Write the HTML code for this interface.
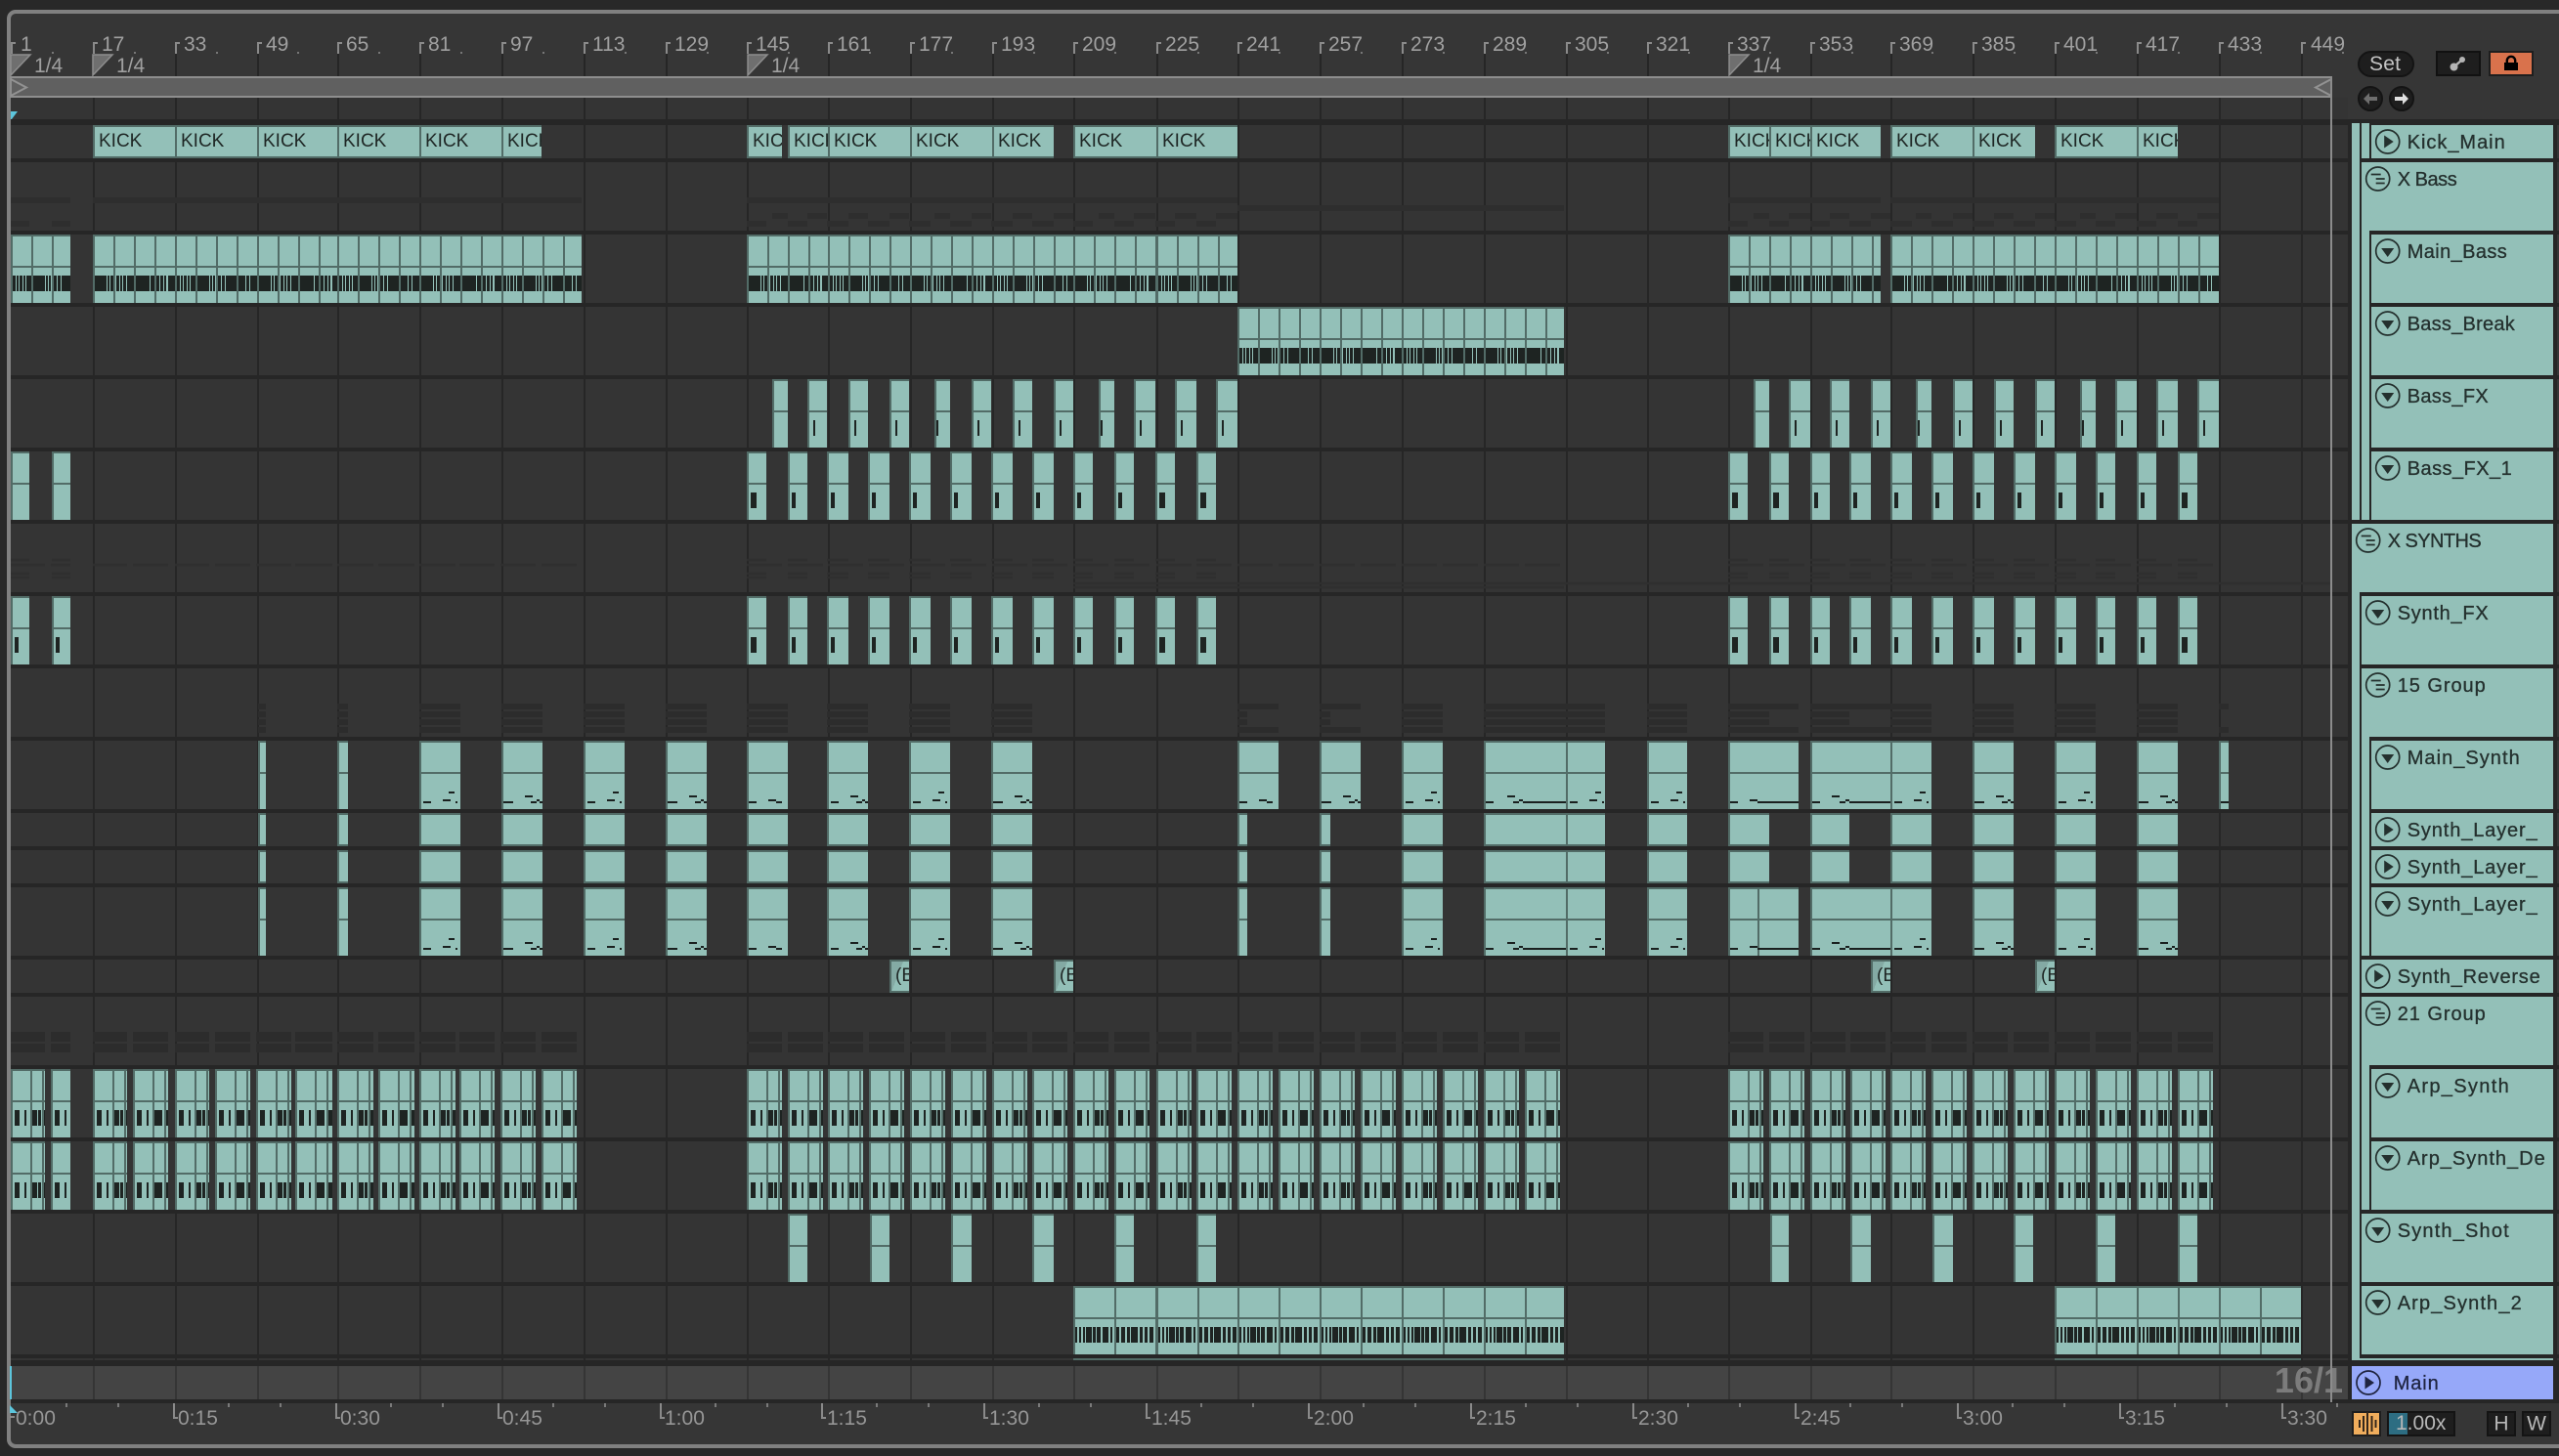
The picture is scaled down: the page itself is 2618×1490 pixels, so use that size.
<!DOCTYPE html>
<html><head><meta charset="utf-8"><title>Arrangement</title>
<style>
html,body{margin:0;padding:0;background:#282828}
#p{position:relative;width:2618px;height:1490px;overflow:hidden;font-family:"Liberation Sans",sans-serif}
svg{position:absolute;left:0;top:0}
text{font-family:"Liberation Sans",sans-serif}
.r{position:absolute;left:0;width:2402px}
.r i{position:absolute;top:0;height:100%;box-sizing:border-box;overflow:hidden;font-style:normal;white-space:nowrap;
--e:linear-gradient(#526c67,#526c67);
background:var(--e) 0 0/100% 2px no-repeat,var(--e) 0 32px/100% 2px no-repeat,var(--e) 0 0/2px 100% no-repeat,#93c0b8}
.h7{height:70px}.h3{height:34px}
.k i{font-size:19px;line-height:34px;color:#1e2624;padding-left:6px}
.rv i{font-size:19px;line-height:34px;color:#1e2624;padding-left:6px;
background:var(--e) 0 0/100% 2px no-repeat,var(--e) 0 32px/100% 2px no-repeat,var(--e) 0 0/2px 100% no-repeat,linear-gradient(to bottom right,#84aaa4 50%,transparent 50%) 2px 2px/12px 31px no-repeat,#93c0b8}
.r b{position:absolute;background:#1e2422}
.fx b{top:42px;left:6px;width:2px;height:16px}
.f1 b{top:42px;left:4px;width:4px;height:16px}
.b i{--bc:linear-gradient(90deg,transparent 0 2px,#1e2422 2px 5px,transparent 5px 6px,#1e2422 6px 8px,transparent 8px 9px,#1e2422 9px 12px,transparent 12px 13px,#1e2422 13px 15px,transparent 15px 16px,#1e2422 16px 21px,transparent 21px 23px,#1e2422 23px 35px,transparent 35px 36px,#1e2422 36px 38px,transparent 38px 39px,#1e2422 39px 41px,transparent 41px 44px,#1e2422 44px 47px,transparent 47px 48px,#1e2422 48px 51px,transparent 51px 52px,#1e2422 52px 63px,transparent 63px 65px,#1e2422 65px 72px,transparent 72px 73px,#1e2422 73px 76px,transparent 76px 77px,#1e2422 77px 84px);
background:var(--e) 0 0/100% 2px no-repeat,var(--e) 0 32px/100% 2px no-repeat,repeating-linear-gradient(90deg,#526c67 0 2px,transparent 2px 21px),var(--bc) 0 42px/84px 16px no-repeat,#93c0b8}
.b i:nth-child(even){--bc:linear-gradient(90deg,transparent 0 2px,#1e2422 2px 14px,transparent 14px 15px,#1e2422 15px 17px,transparent 17px 18px,#1e2422 18px 21px,transparent 21px 24px,#1e2422 24px 27px,transparent 27px 28px,#1e2422 28px 30px,transparent 30px 31px,#1e2422 31px 34px,transparent 34px 35px,#1e2422 35px 42px,transparent 42px 44px,#1e2422 44px 58px,transparent 58px 59px,#1e2422 59px 63px,transparent 63px 65px,#1e2422 65px 68px,transparent 68px 69px,#1e2422 69px 72px,transparent 72px 73px,#1e2422 73px 75px,transparent 75px 77px,#1e2422 77px 84px)}
.d i{--bc:linear-gradient(90deg,transparent 0 2px,#1e2422 2px 4px,transparent 4px 6px,#1e2422 6px 8px,transparent 8px 10px,#1e2422 10px 12px,transparent 12px 13px,#1e2422 13px 19px,transparent 19px 20px,#1e2422 20px 23px,transparent 23px 24px,#1e2422 24px 28px,transparent 28px 30px,#1e2422 30px 36px,transparent 36px 38px,#1e2422 38px 40px,transparent 40px 44px,#1e2422 44px 47px,transparent 47px 49px,#1e2422 49px 53px,transparent 53px 55px,#1e2422 55px 58px,transparent 58px 59px,#1e2422 59px 66px,transparent 66px 68px,#1e2422 68px 71px,transparent 71px 73px,#1e2422 73px 76px,transparent 76px 78px,#1e2422 78px 82px,transparent 82px 84px);
background:var(--e) 0 0/100% 2px no-repeat,var(--e) 0 32px/100% 2px no-repeat,repeating-linear-gradient(90deg,#526c67 0 2px,transparent 2px 42px),var(--bc) 0 42px/84px 16px no-repeat,#93c0b8}
.a i{--bc:linear-gradient(90deg,transparent 0 4px,#1e2422 4px 9px,transparent 9px 14px,#1e2422 14px 16px,transparent 16px 22px,#1e2422 22px 27px,transparent 27px 28px,#1e2422 28px 31px,transparent 31px 34px,#1e2422 34px 36px);
background:var(--e) 0 0/100% 2px no-repeat,var(--e) 0 32px/100% 2px no-repeat,var(--e) 0 0/2px 100% no-repeat,var(--e) 20px 0/2px 100% no-repeat,var(--e) 32px 0/2px 100% no-repeat,var(--bc) 0 42px/38px 16px no-repeat,#93c0b8}
.a i:nth-child(even){--bc:linear-gradient(90deg,transparent 0 4px,#1e2422 4px 9px,transparent 9px 14px,#1e2422 14px 16px,transparent 16px 22px,#1e2422 22px 30px,transparent 30px 34px,#1e2422 34px 36px)}
</style></head><body><div id="p">
<svg width="2618" height="1490" viewBox="0 0 2618 1490">
<defs>
<path id="gb" d="M11 0H72M95 0H595M764 0H1266M1768 0H1924M1934 0H2270"/>
<path id="gfx" d="M790 0h16M826 0h20M868 0h20M910 0h20M956 0h16M994 0h20M1036 0h20M1078 0h20M1124 0h16M1160 0h22M1202 0h22M1244 0h22M1794 0h16M1830 0h22M1872 0h20M1914 0h20M1960 0h16M1998 0h20M2040 0h20M2082 0h20M2128 0h16M2164 0h22M2206 0h22M2248 0h22"/>
<path id="gf1" d="M11 0h19M53 0h19M764 0h20M806 0h20M846 0h22M888 0h22M930 0h22M972 0h22M1014 0h22M1056 0h22M1098 0h20M1140 0h20M1182 0h20M1224 0h20M1768 0h20M1810 0h20M1852 0h20M1892 0h22M1934 0h22M1976 0h22M2018 0h22M2060 0h22M2102 0h22M2144 0h20M2186 0h20M2228 0h20"/>
<path id="gs0" d="M264 0h8M345 0h11M429 0h42M513 0h42M597 0h42M681 0h42M764 0h42M846 0h42M930 0h42M1014 0h42M1266 0h42M1350 0h42M1434 0h42M1518 0h124M1685 0h41M1768 0h72M1852 0h124M2018 0h42M2102 0h42M2186 0h42M2270 0h10"/>
<path id="gs1" d="M264 0h8M345 0h11M429 0h42M513 0h42M597 0h42M681 0h42M764 0h42M846 0h42M930 0h42M1014 0h42M1266 0h10M1350 0h11M1434 0h42M1518 0h124M1685 0h41M1768 0h42M1852 0h40M1934 0h42M2018 0h42M2102 0h42M2186 0h42"/>
<path id="gar" d="M11 0h35M52 0h20M95 0h35M136 0h36M179 0h35M220 0h36M262 0h36M302 0h38M345 0h37M387 0h37M429 0h37M470 0h36M512 0h36M554 0h36M764 0h36M806 0h36M847 0h36M889 0h36M931 0h36M973 0h36M1015 0h36M1056 0h36M1098 0h36M1140 0h36M1183 0h36M1224 0h36M1266 0h36M1308 0h36M1350 0h36M1392 0h36M1434 0h36M1476 0h36M1518 0h36M1560 0h36M1768 0h36M1810 0h36M1852 0h36M1893 0h36M1934 0h36M1976 0h36M2018 0h36M2060 0h36M2102 0h36M2144 0h36M2186 0h36M2228 0h36"/>
<g id="ip"><circle r="12" fill="none" stroke="currentColor" stroke-width="1.7"/><path d="M-3.5-6.5L6 0-3.5 6.5z" fill="currentColor"/></g>
<g id="id"><circle r="12" fill="none" stroke="currentColor" stroke-width="1.7"/><path d="M-6.500-3L6.500-3 0 6z" fill="currentColor"/></g>
<g id="ig"><circle r="12" fill="none" stroke="currentColor" stroke-width="1.7"/><path d="M-7-4.500H3M-2 0H7M-2 4.500H7" fill="none" stroke="currentColor" stroke-width="1.800"/></g>
</defs>
<rect width="2618" height="1490" fill="#282828"/>
<rect x="9" y="12" width="2700" height="1468" rx="7" fill="#363636" stroke="#808080" stroke-width="4"/>
<rect x="11" y="100" width="2391" height="1292" fill="#343434"/>
<rect x="2402" y="122" width="4" height="1314" fill="#262626"/>
<rect x="2612" y="122" width="4" height="1314" fill="#262626"/>
<rect x="2616" y="128" width="2" height="1264" fill="#363636"/>
<rect x="11" y="1398" width="2391" height="34" fill="#444"/>
<path fill="#262626" d="M11 122H2618V128H11zM11 162H2618v4H11zM11 236H2618v4H11zM11 310H2618v4H11zM11 384H2618v4H11zM11 458H2618v4H11zM11 532H2618v4H11zM11 606H2618v4H11zM11 680H2618v4H11zM11 754H2618v4H11zM11 828H2618v4H11zM11 866H2618v4H11zM11 904H2618v4H11zM11 978H2618v4H11zM11 1016H2618v4H11zM11 1090H2618v4H11zM11 1164H2618v4H11zM11 1238H2618v4H11zM11 1312H2618v4H11zM11 1386H2618v4H11zM11 1392H2618V1398H11zM11 1432H2618v4H11z"/>
<rect x="2612" y="1398" width="6" height="38" fill="#262626"/>
<path stroke="#262626" stroke-width="2" fill="none" d="M96 55V1392M180 55V1392M264 55V1392M346 55V1392M430 55V1392M514 55V1392M598 55V1392M682 55V1392M765 55V1392M848 55V1392M932 55V1392M1016 55V1392M1099 55V1392M1184 55V1392M1267 55V1392M1351 55V1392M1435 55V1392M1519 55V1392M1603 55V1392M1686 55V1392M1769 55V1392M1853 55V1392M1935 55V1392M2019 55V1392M2103 55V1392M2187 55V1392M2271 55V1392M2355 55V1392"/>
<path stroke="#353535" stroke-width="2" fill="none" d="M96 1398V1432M180 1398V1432M264 1398V1432M346 1398V1432M430 1398V1432M514 1398V1432M598 1398V1432M682 1398V1432M765 1398V1432M848 1398V1432M932 1398V1432M1016 1398V1432M1099 1398V1432M1184 1398V1432M1267 1398V1432M1351 1398V1432M1435 1398V1432M1519 1398V1432M1603 1398V1432M1686 1398V1432M1769 1398V1432M1853 1398V1432M1935 1398V1432M2019 1398V1432M2103 1398V1432M2187 1398V1432M2271 1398V1432M2355 1398V1432"/>
<path fill="#526c67" d="M1098 1390H1600v2H1098zM2102 1390H2354v2H2102z"/>
<!-- ghost summaries -->
<g stroke="#2e2e2e" fill="none">
<use href="#gb" y="205" stroke-width="6"/><path d="M1266 213H1600" stroke-width="6"/><use href="#gfx" y="221" stroke-width="6"/><use href="#gf1" y="229" stroke-width="6"/>
</g>
<g stroke="#2c2c2c" fill="none">
<use href="#gs0" y="723" stroke-width="6"/><use href="#gs1" y="731" stroke-width="6"/><use href="#gs1" y="739" stroke-width="6"/><use href="#gs0" y="747" stroke-width="6"/>
<use href="#gar" y="1061" stroke-width="10"/><use href="#gar" y="1072.500" stroke-width="9"/>
</g>
<g stroke="#2f2f2f" fill="none">
<use href="#gf1" y="573" stroke-width="2.500"/><use href="#gar" y="578" stroke-width="2.500"/><use href="#gf1" y="587" stroke-width="2.500"/><use href="#gf1" y="591" stroke-width="2.500"/>
<path stroke-width="2.500" d="M1098 597H2385M1098 601H1600"/>
</g>
<!-- ruler -->
<path fill="#8a8a8a" d="M11 43h5v2h-3v10h-2zM95 43h5v2h-3v10h-2zM179 43h5v2h-3v10h-2zM263 43h5v2h-3v10h-2zM345 43h5v2h-3v10h-2zM429 43h5v2h-3v10h-2zM513 43h5v2h-3v10h-2zM597 43h5v2h-3v10h-2zM681 43h5v2h-3v10h-2zM764 43h5v2h-3v10h-2zM847 43h5v2h-3v10h-2zM931 43h5v2h-3v10h-2zM1015 43h5v2h-3v10h-2zM1098 43h5v2h-3v10h-2zM1183 43h5v2h-3v10h-2zM1266 43h5v2h-3v10h-2zM1350 43h5v2h-3v10h-2zM1434 43h5v2h-3v10h-2zM1518 43h5v2h-3v10h-2zM1602 43h5v2h-3v10h-2zM1685 43h5v2h-3v10h-2zM1768 43h5v2h-3v10h-2zM1852 43h5v2h-3v10h-2zM1934 43h5v2h-3v10h-2zM2018 43h5v2h-3v10h-2zM2102 43h5v2h-3v10h-2zM2186 43h5v2h-3v10h-2zM2270 43h5v2h-3v10h-2zM2354 43h5v2h-3v10h-2z"/>
<path fill="#777" d="M53 53h2v2h-2zM137 53h2v2h-2zM221 53h2v2h-2zM304 53h2v2h-2zM387 53h2v2h-2zM471 53h2v2h-2zM555 53h2v2h-2zM639 53h2v2h-2zM723 53h2v2h-2zM806 53h2v2h-2zM889 53h2v2h-2zM973 53h2v2h-2zM1057 53h2v2h-2zM1140 53h2v2h-2zM1225 53h2v2h-2zM1308 53h2v2h-2zM1392 53h2v2h-2zM1476 53h2v2h-2zM1560 53h2v2h-2zM1644 53h2v2h-2zM1727 53h2v2h-2zM1810 53h2v2h-2zM1894 53h2v2h-2zM1976 53h2v2h-2zM2060 53h2v2h-2zM2144 53h2v2h-2zM2228 53h2v2h-2zM2312 53h2v2h-2zM2396 53h2v2h-2z"/>
<g font-size="21" fill="#a0a0a0">
<text x="21" y="52">1</text><text x="104" y="52">17</text><text x="188" y="52">33</text><text x="272" y="52">49</text><text x="354" y="52">65</text><text x="438" y="52">81</text><text x="522" y="52">97</text><text x="606" y="52">113</text><text x="690" y="52">129</text><text x="773" y="52">145</text><text x="856" y="52">161</text><text x="940" y="52">177</text><text x="1024" y="52">193</text><text x="1107" y="52">209</text><text x="1192" y="52">225</text><text x="1275" y="52">241</text><text x="1359" y="52">257</text><text x="1443" y="52">273</text><text x="1527" y="52">289</text><text x="1611" y="52">305</text><text x="1694" y="52">321</text><text x="1777" y="52">337</text><text x="1861" y="52">353</text><text x="1943" y="52">369</text><text x="2027" y="52">385</text><text x="2111" y="52">401</text><text x="2195" y="52">417</text><text x="2279" y="52">433</text><text x="2364" y="52">449</text>
<text x="35" y="74">1/4</text><text x="119" y="74">1/4</text><text x="789" y="74">1/4</text><text x="1793" y="74">1/4</text>
</g>
<g fill="#6f6f6f" stroke="#8e8e8e" stroke-width="1.500">
<path d="M11 56H31L11 77z"/><path d="M95 56H115L95 77z"/><path d="M765 56H785L765 77z"/><path d="M1769 56H1789L1769 77z"/>
</g>
<!-- loop brace -->
<rect x="11" y="79" width="2374" height="20" fill="#606060" stroke="#8e8e8e" stroke-width="2"/>
<path d="M11 81L27 89.500 11 98M2385 81L2369 89.500 2385 98" fill="none" stroke="#929292" stroke-width="2"/>
<rect x="2384" y="78" width="2" height="1357" fill="#8c8c8c"/>
<path d="M11 114H18L12 122H11z" fill="#5cc5dc"/>
<rect x="10" y="1398" width="2" height="34" fill="#5cc5dc"/>
<!-- time ruler -->
<path fill="#8a8a8a" d="M177 1436h2v14h3v2h-5zM343 1436h2v14h3v2h-5zM509 1436h2v14h3v2h-5zM675 1436h2v14h3v2h-5zM840 1436h2v14h3v2h-5zM1006 1436h2v14h3v2h-5zM1172 1436h2v14h3v2h-5zM1338 1436h2v14h3v2h-5zM1504 1436h2v14h3v2h-5zM1670 1436h2v14h3v2h-5zM1836 1436h2v14h3v2h-5zM2002 1436h2v14h3v2h-5zM2168 1436h2v14h3v2h-5zM2334 1436h2v14h3v2h-5z"/>
<path fill="#7a7a7a" d="M67 1436h2v4h-2zM120 1436h2v4h-2zM233 1436h2v4h-2zM286 1436h2v4h-2zM399 1436h2v4h-2zM452 1436h2v4h-2zM565 1436h2v4h-2zM618 1436h2v4h-2zM731 1436h2v4h-2zM784 1436h2v4h-2zM896 1436h2v4h-2zM949 1436h2v4h-2zM1062 1436h2v4h-2zM1115 1436h2v4h-2zM1228 1436h2v4h-2zM1281 1436h2v4h-2zM1394 1436h2v4h-2zM1447 1436h2v4h-2zM1560 1436h2v4h-2zM1613 1436h2v4h-2zM1726 1436h2v4h-2zM1779 1436h2v4h-2zM1892 1436h2v4h-2zM1945 1436h2v4h-2zM2058 1436h2v4h-2zM2111 1436h2v4h-2zM2224 1436h2v4h-2zM2277 1436h2v4h-2zM2390 1436h2v4h-2z"/>
<path d="M10 1438L18 1446H10z" fill="#5cc5dc"/><rect x="10" y="1449" width="5" height="2" fill="#8a8a8a"/>
<g font-size="21" fill="#969696">
<text x="16" y="1458">0:00</text><text x="182" y="1458">0:15</text><text x="348" y="1458">0:30</text><text x="514" y="1458">0:45</text><text x="680" y="1458">1:00</text><text x="846" y="1458">1:15</text><text x="1012" y="1458">1:30</text><text x="1178" y="1458">1:45</text><text x="1344" y="1458">2:00</text><text x="1510" y="1458">2:15</text><text x="1676" y="1458">2:30</text><text x="1842" y="1458">2:45</text><text x="2008" y="1458">3:00</text><text x="2174" y="1458">3:15</text><text x="2340" y="1458">3:30</text>
</g>
<text x="2397" y="1425" text-anchor="end" font-size="36" font-weight="700" fill="#7c7c7c">16/1</text>
<rect x="2384" y="1398" width="2" height="37" fill="#8c8c8c"/>
<!-- sidebar -->
<rect x="2406" y="126" width="206" height="1266" fill="#93c0b8"/>
<path fill="#262626" d="M2426 126H2612V128H2426zM2414 126h2V532h-2zM2414 606h2V1390h-2zM2424 126h2V162h-2zM2424 236h2V532h-2zM2424 754h2V978h-2zM2424 1090h2V1238h-2zM2416 162H2612v4H2416zM2424 236H2612v4H2424zM2424 310H2612v4H2424zM2424 384H2612v4H2424zM2424 458H2612v4H2424zM2406 532H2612v4H2406zM2414 606H2612v4H2414zM2414 680H2612v4H2414zM2424 754H2612v4H2424zM2424 828H2612v4H2424zM2424 866H2612v4H2424zM2424 904H2612v4H2424zM2414 978H2612v4H2414zM2414 1016H2612v4H2414zM2424 1090H2612v4H2424zM2424 1164H2612v4H2424zM2414 1238H2612v4H2414zM2414 1312H2612v4H2414zM2414 1386H2612v4H2414z"/>
<rect x="2406" y="1398" width="206" height="34" fill="#96a8f9"/>
<g style="color:#24302e">
<use href="#ip" x="2442.700" y="145"/><use href="#ig" x="2432.700" y="183"/><use href="#id" x="2442.700" y="257"/><use href="#id" x="2442.700" y="331"/><use href="#id" x="2442.700" y="405"/><use href="#id" x="2442.700" y="479"/><use href="#ig" x="2422.700" y="553"/><use href="#id" x="2432.700" y="627"/><use href="#ig" x="2432.700" y="701"/><use href="#id" x="2442.700" y="775"/><use href="#ip" x="2442.700" y="849"/><use href="#ip" x="2442.700" y="887"/><use href="#id" x="2442.700" y="925"/><use href="#ip" x="2432.700" y="999"/><use href="#ig" x="2432.700" y="1037"/><use href="#id" x="2442.700" y="1111"/><use href="#id" x="2442.700" y="1185"/><use href="#id" x="2432.700" y="1259"/><use href="#id" x="2432.700" y="1333"/>
</g>
<use href="#ip" x="2423" y="1415" style="color:#1f2440"/>
<g font-size="20" fill="#24302e" stroke="#24302e" stroke-width=".3">
<text x="2462.700" y="152" textLength="100">Kick_Main</text>
<text x="2452.700" y="190" textLength="61">X Bass</text>
<text x="2462.700" y="264" textLength="102">Main_Bass</text>
<text x="2462.700" y="338" textLength="110">Bass_Break</text>
<text x="2462.700" y="412" textLength="83">Bass_FX</text>
<text x="2462.700" y="486" textLength="107">Bass_FX_1</text>
<text x="2442.700" y="560" textLength="96">X SYNTHS</text>
<text x="2452.700" y="634" textLength="93">Synth_FX</text>
<text x="2452.700" y="708" textLength="90">15 Group</text>
<text x="2462.700" y="782" textLength="115">Main_Synth</text>
<text x="2462.700" y="856" textLength="133">Synth_Layer_</text>
<text x="2462.700" y="894" textLength="133">Synth_Layer_</text>
<text x="2462.700" y="932" textLength="133">Synth_Layer_</text>
<text x="2452.700" y="1006" textLength="146">Synth_Reverse</text>
<text x="2452.700" y="1044" textLength="90">21 Group</text>
<text x="2462.700" y="1118" textLength="104">Arp_Synth</text>
<text x="2462.700" y="1192" textLength="141">Arp_Synth_De</text>
<text x="2452.700" y="1266" textLength="114">Synth_Shot</text>
<text x="2452.700" y="1340" textLength="127">Arp_Synth_2</text>
</g>
<text x="2448.700" y="1422" font-size="20" textLength="46" fill="#1f2440" stroke="#1f2440" stroke-width=".3">Main</text>
<!-- top right controls -->
<rect x="2413" y="53" width="56" height="25" rx="12.500" fill="#1e1e1e" stroke="#141414" stroke-width="2"/>
<text x="2424" y="72" font-size="21" fill="#c4c4c4" textLength="32">Set</text>
<rect x="2493" y="53" width="44" height="24" fill="#1e1e1e" stroke="#111" stroke-width="2"/>
<path d="M2510.500 68.500L2519 61" stroke="#b4b4b4" stroke-width="2.500"/><circle cx="2510.500" cy="68.500" r="4" fill="#b4b4b4"/><circle cx="2519" cy="61" r="3" fill="#b4b4b4"/>
<rect x="2547" y="53" width="44" height="24" fill="#d9724c" stroke="#1e1e1e" stroke-width="2"/>
<rect x="2562" y="64" width="14" height="8" fill="#000"/><path d="M2564.800 64v-2a4.200 4.200 0 0 1 8.400 0v2" fill="none" stroke="#000" stroke-width="2.400"/>
<circle cx="2425" cy="101" r="12" fill="#1e1e1e" stroke="#141414" stroke-width="2"/><circle cx="2457" cy="101" r="12" fill="#1e1e1e" stroke="#141414" stroke-width="2"/>
<path d="M2418 101l6-6v4h8v4h-8v4z" fill="#6e6e6e"/><path d="M2464 101l-6-6v4h-8v4h8v4z" fill="#e0e0e0"/>
<!-- bottom right controls -->
<rect x="2407" y="1445" width="28" height="24" fill="#f0ad5c" stroke="#1e1e1e" stroke-width="2"/>
<path d="M2414 1453v8M2418 1449v16M2422 1445v24M2426.500 1449v16M2430.500 1453v8" stroke="#33261a" stroke-width="2" fill="none"/>
<rect x="2443" y="1445" width="68" height="24" fill="#1e1e1e" stroke="#141414" stroke-width="2"/>
<rect x="2444" y="1446" width="19" height="22" fill="#2d6d82"/>
<text x="2451" y="1463" font-size="21" fill="#b8b8b8">1.00x</text>
<rect x="2545" y="1445" width="28" height="24" fill="#1e1e1e" stroke="#141414" stroke-width="2"/>
<rect x="2581" y="1445" width="28" height="24" fill="#1e1e1e" stroke="#141414" stroke-width="2"/>
<text x="2559" y="1463.500" font-size="21" fill="#b8b8b8" text-anchor="middle">H</text>
<text x="2595" y="1463.500" font-size="21" fill="#b8b8b8" text-anchor="middle">W</text>
</svg>

<div class="r h3 k" style="top:128px">
<i style="left:95px;width:84px">KICK</i><i style="left:179px;width:84px">KICK</i><i style="left:263px;width:82px">KICK</i><i style="left:345px;width:84px">KICK</i><i style="left:429px;width:84px">KICK</i><i style="left:513px;width:41px">KICK</i>
<i style="left:764px;width:36px">KICK</i><i style="left:806px;width:41px">KICK</i><i style="left:847px;width:84px">KICK</i><i style="left:931px;width:84px">KICK</i><i style="left:1015px;width:63px">KICK</i>
<i style="left:1098px;width:85px">KICK</i><i style="left:1183px;width:83px">KICK</i>
<i style="left:1768px;width:42px">KICK</i><i style="left:1810px;width:42px">KICK</i><i style="left:1852px;width:72px">KICK</i><i style="left:1934px;width:84px">KICK</i><i style="left:2018px;width:64px">KICK</i>
<i style="left:2102px;width:84px">KICK</i><i style="left:2186px;width:42px">KICK</i>
</div>

<div class="r h7 b" style="top:240px"><i style="left:11px;width:61px"></i><i style="left:95px;width:84px"></i><i style="left:179px;width:84px"></i><i style="left:263px;width:82px"></i><i style="left:345px;width:84px"></i><i style="left:429px;width:84px"></i><i style="left:513px;width:82px"></i><i style="left:764px;width:83px"></i><i style="left:847px;width:84px"></i><i style="left:931px;width:84px"></i><i style="left:1015px;width:83px"></i><i style="left:1098px;width:85px"></i><i style="left:1183px;width:83px"></i><i style="left:1768px;width:84px"></i><i style="left:1852px;width:72px"></i><i style="left:1934px;width:84px"></i><i style="left:2018px;width:84px"></i><i style="left:2102px;width:84px"></i><i style="left:2186px;width:84px"></i></div>

<div class="r h7 b" style="top:314px"><i style="left:1266px;width:84px"></i><i style="left:1350px;width:84px"></i><i style="left:1434px;width:84px"></i><i style="left:1518px;width:82px"></i></div>

<div class="r h7 fx" style="top:388px"><i style="left:790px;width:16px"></i><i style="left:826px;width:20px"><b></b></i><i style="left:868px;width:20px"><b></b></i><i style="left:910px;width:20px"><b></b></i><i style="left:956px;width:16px"><b style="left:2px"></b></i><i style="left:994px;width:20px"><b></b></i><i style="left:1036px;width:20px"><b></b></i><i style="left:1078px;width:20px"><b></b></i><i style="left:1124px;width:16px"><b style="left:2px"></b></i><i style="left:1160px;width:22px"><b></b></i><i style="left:1202px;width:22px"><b></b></i><i style="left:1244px;width:22px"><b></b></i><i style="left:1794px;width:16px"></i><i style="left:1830px;width:22px"><b></b></i><i style="left:1872px;width:20px"><b></b></i><i style="left:1914px;width:20px"><b></b></i><i style="left:1960px;width:16px"><b style="left:2px"></b></i><i style="left:1998px;width:20px"><b></b></i><i style="left:2040px;width:20px"><b></b></i><i style="left:2082px;width:20px"><b></b></i><i style="left:2128px;width:16px"><b style="left:2px"></b></i><i style="left:2164px;width:22px"><b></b></i><i style="left:2206px;width:22px"><b></b></i><i style="left:2248px;width:22px"><b></b></i></div>

<div class="r h7 f1" style="top:462px"><i style="left:11px;width:19px"></i><i style="left:53px;width:19px"></i><i style="left:764px;width:20px"><b style="width:6px"></b></i><i style="left:806px;width:20px"><b></b></i><i style="left:846px;width:22px"><b></b></i><i style="left:888px;width:22px"><b></b></i><i style="left:930px;width:22px"><b></b></i><i style="left:972px;width:22px"><b></b></i><i style="left:1014px;width:22px"><b></b></i><i style="left:1056px;width:22px"><b></b></i><i style="left:1098px;width:20px"><b></b></i><i style="left:1140px;width:20px"><b></b></i><i style="left:1182px;width:20px"><b style="width:6px"></b></i><i style="left:1224px;width:20px"><b style="width:6px"></b></i><i style="left:1768px;width:20px"><b style="width:6px"></b></i><i style="left:1810px;width:20px"><b style="width:6px"></b></i><i style="left:1852px;width:20px"><b></b></i><i style="left:1892px;width:22px"><b></b></i><i style="left:1934px;width:22px"><b></b></i><i style="left:1976px;width:22px"><b></b></i><i style="left:2018px;width:22px"><b></b></i><i style="left:2060px;width:22px"><b></b></i><i style="left:2102px;width:22px"><b></b></i><i style="left:2144px;width:20px"><b></b></i><i style="left:2186px;width:20px"><b></b></i><i style="left:2228px;width:20px"><b style="width:6px"></b></i></div>

<div class="r h7 f1" style="top:610px"><i style="left:11px;width:19px"><b></b></i><i style="left:53px;width:19px"><b></b></i><i style="left:764px;width:20px"><b style="width:6px"></b></i><i style="left:806px;width:20px"><b></b></i><i style="left:846px;width:22px"><b></b></i><i style="left:888px;width:22px"><b></b></i><i style="left:930px;width:22px"><b></b></i><i style="left:972px;width:22px"><b></b></i><i style="left:1014px;width:22px"><b></b></i><i style="left:1056px;width:22px"><b></b></i><i style="left:1098px;width:20px"><b></b></i><i style="left:1140px;width:20px"><b></b></i><i style="left:1182px;width:20px"><b style="width:6px"></b></i><i style="left:1224px;width:20px"><b style="width:6px"></b></i><i style="left:1768px;width:20px"><b style="width:6px"></b></i><i style="left:1810px;width:20px"><b style="width:6px"></b></i><i style="left:1852px;width:20px"><b></b></i><i style="left:1892px;width:22px"><b></b></i><i style="left:1934px;width:22px"><b></b></i><i style="left:1976px;width:22px"><b></b></i><i style="left:2018px;width:22px"><b></b></i><i style="left:2060px;width:22px"><b></b></i><i style="left:2102px;width:22px"><b></b></i><i style="left:2144px;width:20px"><b></b></i><i style="left:2186px;width:20px"><b></b></i><i style="left:2228px;width:20px"><b style="width:6px"></b></i></div>

<div class="r h7" style="top:758px"><i style="left:264px;width:8px"></i><i style="left:345px;width:11px"></i><i style="left:429px;width:42px"></i><i style="left:513px;width:42px"></i><i style="left:597px;width:42px"></i><i style="left:681px;width:42px"></i><i style="left:764px;width:42px"></i><i style="left:846px;width:42px"></i><i style="left:930px;width:42px"></i><i style="left:1014px;width:42px"></i><i style="left:1266px;width:42px"></i><i style="left:1350px;width:42px"></i><i style="left:1434px;width:42px"></i><i style="left:1518px;width:84px"></i><i style="left:1602px;width:40px"></i><i style="left:1685px;width:41px"></i><i style="left:1768px;width:72px"></i><i style="left:1852px;width:82px"></i><i style="left:1934px;width:42px"></i><i style="left:2018px;width:42px"></i><i style="left:2102px;width:42px"></i><i style="left:2186px;width:42px"></i><i style="left:2270px;width:10px"></i></div>

<div class="r h3" style="top:832px"><i style="left:264px;width:8px"></i><i style="left:345px;width:11px"></i><i style="left:429px;width:42px"></i><i style="left:513px;width:42px"></i><i style="left:597px;width:42px"></i><i style="left:681px;width:42px"></i><i style="left:764px;width:42px"></i><i style="left:846px;width:42px"></i><i style="left:930px;width:42px"></i><i style="left:1014px;width:42px"></i><i style="left:1266px;width:10px"></i><i style="left:1350px;width:11px"></i><i style="left:1434px;width:42px"></i><i style="left:1518px;width:84px"></i><i style="left:1602px;width:40px"></i><i style="left:1685px;width:41px"></i><i style="left:1768px;width:42px"></i><i style="left:1852px;width:40px"></i><i style="left:1934px;width:42px"></i><i style="left:2018px;width:42px"></i><i style="left:2102px;width:42px"></i><i style="left:2186px;width:42px"></i></div>

<div class="r h3" style="top:870px"><i style="left:264px;width:8px"></i><i style="left:345px;width:11px"></i><i style="left:429px;width:42px"></i><i style="left:513px;width:42px"></i><i style="left:597px;width:42px"></i><i style="left:681px;width:42px"></i><i style="left:764px;width:42px"></i><i style="left:846px;width:42px"></i><i style="left:930px;width:42px"></i><i style="left:1014px;width:42px"></i><i style="left:1266px;width:10px"></i><i style="left:1350px;width:11px"></i><i style="left:1434px;width:42px"></i><i style="left:1518px;width:84px"></i><i style="left:1602px;width:40px"></i><i style="left:1685px;width:41px"></i><i style="left:1768px;width:42px"></i><i style="left:1852px;width:40px"></i><i style="left:1934px;width:42px"></i><i style="left:2018px;width:42px"></i><i style="left:2102px;width:42px"></i><i style="left:2186px;width:42px"></i></div>

<div class="r h7" style="top:908px"><i style="left:264px;width:8px"></i><i style="left:345px;width:11px"></i><i style="left:429px;width:42px"></i><i style="left:513px;width:42px"></i><i style="left:597px;width:42px"></i><i style="left:681px;width:42px"></i><i style="left:764px;width:42px"></i><i style="left:846px;width:42px"></i><i style="left:930px;width:42px"></i><i style="left:1014px;width:42px"></i><i style="left:1266px;width:10px"></i><i style="left:1350px;width:11px"></i><i style="left:1434px;width:42px"></i><i style="left:1518px;width:84px"></i><i style="left:1602px;width:40px"></i><i style="left:1685px;width:41px"></i><i style="left:1768px;width:30px"></i><i style="left:1798px;width:42px"></i><i style="left:1852px;width:82px"></i><i style="left:1934px;width:42px"></i><i style="left:2018px;width:42px"></i><i style="left:2102px;width:42px"></i><i style="left:2186px;width:42px"></i></div>

<div class="r h3 rv" style="top:982px"><i style="left:910px;width:20px">(B</i><i style="left:1078px;width:20px">(B</i><i style="left:1914px;width:20px">(B</i><i style="left:2082px;width:20px">(B</i></div>

<div class="r h7 a" style="top:1094px"><i style="left:11px;width:35px"></i><i style="left:52px;width:20px"></i><i style="left:95px;width:35px"></i><i style="left:136px;width:36px"></i><i style="left:179px;width:35px"></i><i style="left:220px;width:36px"></i><i style="left:262px;width:36px"></i><i style="left:302px;width:38px"></i><i style="left:345px;width:37px"></i><i style="left:387px;width:37px"></i><i style="left:429px;width:37px"></i><i style="left:470px;width:36px"></i><i style="left:512px;width:36px"></i><i style="left:554px;width:36px"></i><i style="left:764px;width:36px"></i><i style="left:806px;width:36px"></i><i style="left:847px;width:36px"></i><i style="left:889px;width:36px"></i><i style="left:931px;width:36px"></i><i style="left:973px;width:36px"></i><i style="left:1015px;width:36px"></i><i style="left:1056px;width:36px"></i><i style="left:1098px;width:36px"></i><i style="left:1140px;width:36px"></i><i style="left:1183px;width:36px"></i><i style="left:1224px;width:36px"></i><i style="left:1266px;width:36px"></i><i style="left:1308px;width:36px"></i><i style="left:1350px;width:36px"></i><i style="left:1392px;width:36px"></i><i style="left:1434px;width:36px"></i><i style="left:1476px;width:36px"></i><i style="left:1518px;width:36px"></i><i style="left:1560px;width:36px"></i><i style="left:1768px;width:36px"></i><i style="left:1810px;width:36px"></i><i style="left:1852px;width:36px"></i><i style="left:1893px;width:36px"></i><i style="left:1934px;width:36px"></i><i style="left:1976px;width:36px"></i><i style="left:2018px;width:36px"></i><i style="left:2060px;width:36px"></i><i style="left:2102px;width:36px"></i><i style="left:2144px;width:36px"></i><i style="left:2186px;width:36px"></i><i style="left:2228px;width:36px"></i></div>

<div class="r h7 a" style="top:1168px"><i style="left:11px;width:35px"></i><i style="left:52px;width:20px"></i><i style="left:95px;width:35px"></i><i style="left:136px;width:36px"></i><i style="left:179px;width:35px"></i><i style="left:220px;width:36px"></i><i style="left:262px;width:36px"></i><i style="left:302px;width:38px"></i><i style="left:345px;width:37px"></i><i style="left:387px;width:37px"></i><i style="left:429px;width:37px"></i><i style="left:470px;width:36px"></i><i style="left:512px;width:36px"></i><i style="left:554px;width:36px"></i><i style="left:764px;width:36px"></i><i style="left:806px;width:36px"></i><i style="left:847px;width:36px"></i><i style="left:889px;width:36px"></i><i style="left:931px;width:36px"></i><i style="left:973px;width:36px"></i><i style="left:1015px;width:36px"></i><i style="left:1056px;width:36px"></i><i style="left:1098px;width:36px"></i><i style="left:1140px;width:36px"></i><i style="left:1183px;width:36px"></i><i style="left:1224px;width:36px"></i><i style="left:1266px;width:36px"></i><i style="left:1308px;width:36px"></i><i style="left:1350px;width:36px"></i><i style="left:1392px;width:36px"></i><i style="left:1434px;width:36px"></i><i style="left:1476px;width:36px"></i><i style="left:1518px;width:36px"></i><i style="left:1560px;width:36px"></i><i style="left:1768px;width:36px"></i><i style="left:1810px;width:36px"></i><i style="left:1852px;width:36px"></i><i style="left:1893px;width:36px"></i><i style="left:1934px;width:36px"></i><i style="left:1976px;width:36px"></i><i style="left:2018px;width:36px"></i><i style="left:2060px;width:36px"></i><i style="left:2102px;width:36px"></i><i style="left:2144px;width:36px"></i><i style="left:2186px;width:36px"></i><i style="left:2228px;width:36px"></i></div>

<div class="r h7" style="top:1242px"><i style="left:806px;width:20px"></i><i style="left:890px;width:20px"></i><i style="left:973px;width:21px"></i><i style="left:1056px;width:22px"></i><i style="left:1140px;width:20px"></i><i style="left:1224px;width:20px"></i><i style="left:1811px;width:19px"></i><i style="left:1893px;width:21px"></i><i style="left:1977px;width:21px"></i><i style="left:2060px;width:20px"></i><i style="left:2144px;width:20px"></i><i style="left:2228px;width:20px"></i></div>

<div class="r h7 d" style="top:1316px"><i style="left:1098px;width:85px"></i><i style="left:1183px;width:83px"></i><i style="left:1266px;width:84px"></i><i style="left:1350px;width:84px"></i><i style="left:1434px;width:84px"></i><i style="left:1518px;width:82px"></i><i style="left:2102px;width:84px"></i><i style="left:2186px;width:84px"></i><i style="left:2270px;width:84px"></i></div>

<svg width="2618" height="1490" viewBox="0 0 2618 1490" style="pointer-events:none">
<defs>
<path id="nA" d="M2 63h8M22 61h8M30 63h6"/>
<path id="nB" d="M4 63h8M24 57h8M30 63h6M36 61h3M39 63h3"/>
<path id="nC" d="M4 63h8M24 61h8M30 53h6M37 63h2"/>
<path id="nD" d="M2 63h10M24 57h8M30 63h6M36 61h3M39 63h3"/>
<path id="nL1" d="M2 63h8M24 57h8M30 63h6M36 61h4M40 63h44"/>
<path id="nL2" d="M2 63h8M22 61h8M30 63h42"/>
<path id="nL3" d="M2 63h8M22 57h8M30 63h6M36 61h4M40 63h42"/>
<g id="ns"><use href="#nC" x="429"/><use href="#nD" x="513"/><use href="#nC" x="597"/><use href="#nD" x="681"/><use href="#nA" x="764"/><use href="#nB" x="846"/><use href="#nC" x="930"/><use href="#nD" x="1014"/><use href="#nC" x="1434"/><use href="#nL1" x="1518"/><use href="#nC" x="1602"/><use href="#nC" x="1685"/><use href="#nL2" x="1768"/><use href="#nL3" x="1852"/><use href="#nC" x="1934"/><use href="#nD" x="2018"/><use href="#nC" x="2102"/><use href="#nD" x="2186"/></g>
</defs>
<g fill="none" stroke="#1a201f" stroke-width="2">
<use href="#ns" y="758"/><use href="#ns" y="908"/>
<use href="#nA" x="1266" y="758"/><use href="#nD" x="1350" y="758"/><path d="M2272 821h8"/>
</g>
</svg>
</div></body></html>
